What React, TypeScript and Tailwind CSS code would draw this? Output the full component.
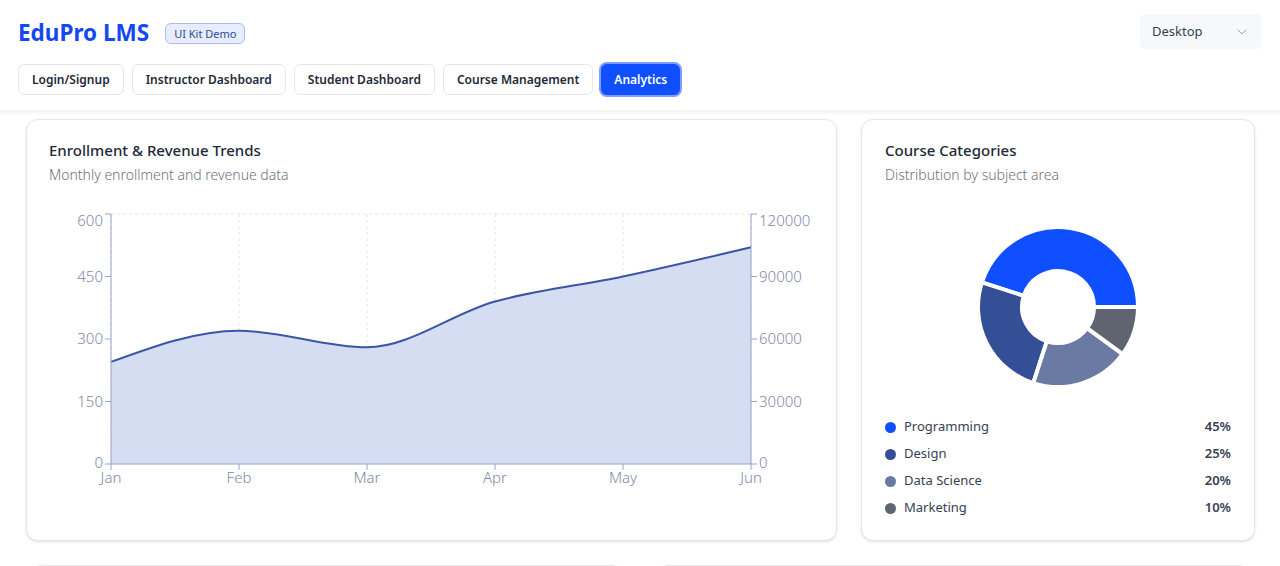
import { ChevronDown } from "lucide-react";

type Pt = { x: number; y: number };

const months = ["Jan", "Feb", "Mar", "Apr", "May", "Jun"];
const enrollments = [245, 320, 280, 390, 450, 520];

const categories = [
  { name: "Programming", value: 45, color: "#0f4fff" },
  { name: "Design", value: 25, color: "#354f96" },
  { name: "Data Science", value: 20, color: "#6b7aa3" },
  { name: "Marketing", value: 10, color: "#5f6470" },
];

// monotone-x curve, same as d3's curveMonotoneX
function monotonePath(pts: Pt[]) {
  const n = pts.length;
  const t: number[] = new Array(n).fill(0);
  const sign = (v: number) => (v < 0 ? -1 : 1);
  for (let i = 1; i < n - 1; i++) {
    const h0 = pts[i].x - pts[i - 1].x;
    const h1 = pts[i + 1].x - pts[i].x;
    const s0 = (pts[i].y - pts[i - 1].y) / h0;
    const s1 = (pts[i + 1].y - pts[i].y) / h1;
    const p = (s0 * h1 + s1 * h0) / (h0 + h1);
    t[i] = (sign(s0) + sign(s1)) * Math.min(Math.abs(s0), Math.abs(s1), 0.5 * Math.abs(p)) || 0;
  }
  const h = pts[1].x - pts[0].x;
  t[0] = (3 * (pts[1].y - pts[0].y) / h - t[1]) / 2;
  const hl = pts[n - 1].x - pts[n - 2].x;
  t[n - 1] = (3 * (pts[n - 1].y - pts[n - 2].y) / hl - t[n - 2]) / 2;
  let d = `M${pts[0].x},${pts[0].y}`;
  for (let i = 0; i < n - 1; i++) {
    const dx = (pts[i + 1].x - pts[i].x) / 3;
    d += ` C${pts[i].x + dx},${pts[i].y + dx * t[i]} ${pts[i + 1].x - dx},${pts[i + 1].y - dx * t[i + 1]} ${pts[i + 1].x},${pts[i + 1].y}`;
  }
  return d;
}

function TrendChart() {
  const left = 62;
  const right = 702;
  const top = 14;
  const bottom = 264;
  const step = (right - left) / 5;
  const pts = enrollments.map((v, i) => ({ x: left + i * step, y: bottom - (v / 600) * (bottom - top) }));
  const line = monotonePath(pts);
  const area = `${line} L${right},${bottom} L${left},${bottom} Z`;
  const leftTicks = [0, 150, 300, 450, 600];
  const rightTicks = [0, 30000, 60000, 90000, 120000];
  const axis = "#9aa3c6";
  const label = "#7f88a8";

  return (
    <svg width={765} height={290} className="block">
      <line x1={left} y1={top} x2={right} y2={top} stroke="#e3e5ea" strokeDasharray="3 3" />
      {months.map((_, i) => (
        <line key={i} x1={left + i * step} y1={top} x2={left + i * step} y2={bottom} stroke="#e3e5ea" strokeDasharray="3 3" />
      ))}
      <path d={area} fill="#d5ddf3" />
      <path d={line} fill="none" stroke="#3a55a5" strokeWidth={2} />
      <line x1={left} y1={top} x2={left} y2={bottom} stroke={axis} />
      <line x1={right} y1={top} x2={right} y2={bottom} stroke={axis} />
      <line x1={left} y1={bottom} x2={right} y2={bottom} stroke={axis} />
      {leftTicks.map((v, i) => {
        const y = bottom - (i / 4) * (bottom - top);
        const ty = i === 4 ? y + 12 : i === 0 ? y + 4 : y + 5;
        return (
          <g key={v}>
            <line x1={left - 6} y1={y} x2={left} y2={y} stroke={axis} />
            <text x={left - 8} y={ty} textAnchor="end" fontSize={15} fill={label} fontWeight={300}>
              {v}
            </text>
          </g>
        );
      })}
      {rightTicks.map((v, i) => {
        const y = bottom - (i / 4) * (bottom - top);
        const ty = i === 4 ? y + 12 : i === 0 ? y + 4 : y + 5;
        return (
          <g key={v}>
            <line x1={right} y1={y} x2={right + 6} y2={y} stroke={axis} />
            <text x={right + 8} y={ty} fontSize={15} fill={label} fontWeight={300}>
              {v}
            </text>
          </g>
        );
      })}
      {months.map((m, i) => (
        <g key={m}>
          <line x1={left + i * step} y1={bottom} x2={left + i * step} y2={bottom + 6} stroke={axis} />
          <text x={left + i * step} y={bottom + 19} textAnchor="middle" fontSize={15} fill={label} fontWeight={300}>
            {m}
          </text>
        </g>
      ))}
    </svg>
  );
}

function Donut() {
  const cx = 100;
  const cy = 90;
  const ro = 80;
  const ri = 36;
  let start = 0;
  const rad = (a: number) => (a * Math.PI) / 180;
  const pt = (r: number, a: number) => `${cx + r * Math.cos(rad(a))},${cy - r * Math.sin(rad(a))}`;
  return (
    <svg width={200} height={180} className="block">
      {categories.map((c) => {
        const end = start + (c.value / 100) * 360;
        const large = end - start > 180 ? 1 : 0;
        const d = `M${pt(ro, start)} A${ro},${ro} 0 ${large} 0 ${pt(ro, end)} L${pt(ri, end)} A${ri},${ri} 0 ${large} 1 ${pt(ri, start)} Z`;
        start = end;
        return <path key={c.name} d={d} fill={c.color} stroke="#fff" strokeWidth={4} strokeLinejoin="round" />;
      })}
    </svg>
  );
}

const tabs = ["Login/Signup", "Instructor Dashboard", "Student Dashboard", "Course Management", "Analytics"];

export default function App() {
  return (
    <div className="min-h-[566px] bg-white text-gray-800" style={{ fontFamily: '"Noto Sans", "Open Sans", sans-serif' }}>
      <header className="bg-white px-[18px] pt-[14px] pb-[15px] shadow-[0_2px_4px_rgba(0,0,0,0.06)] border-b border-gray-100">
        <div className="flex items-center justify-between h-[35px]">
          <div className="flex items-center gap-4 pt-1">
            <h1 className="text-[22.5px] font-bold text-[#1448f0] leading-none">EduPro LMS</h1>
            <span className="text-[11px] leading-none px-2 py-[4px] rounded-md bg-[#e7edfc] border border-[#a9bdf5] text-[#2c4a9c]">
              UI Kit Demo
            </span>
          </div>
          <div className="w-[122px] h-[35px] rounded-md bg-[#f7f8fa] flex items-center justify-between px-3">
            <span className="text-[13px] text-gray-700">Desktop</span>
            <ChevronDown className="w-4 h-4 text-gray-400" strokeWidth={1.5} />
          </div>
        </div>
        <nav className="flex gap-2 mt-[15px]">
          {tabs.map((t) =>
            t === "Analytics" ? (
              <button key={t} className="h-[31px] px-[13px] rounded-md text-[12px] font-semibold bg-[#0f4fff] text-white ring-2 ring-[#7f9cff]">
                {t}
              </button>
            ) : (
              <button key={t} className="h-[31px] px-[13px] rounded-md text-[12px] font-semibold text-gray-800 border border-gray-200 bg-white">
                {t}
              </button>
            )
          )}
        </nav>
      </header>

      <main className="pt-[8px]">
        <div className="grid grid-cols-[1fr_394px] gap-6 px-[26px]">
          <section className="h-[422px] rounded-xl border border-gray-200 bg-white shadow-sm px-[22px] pt-[20px]">
            <h2 className="text-[15px] font-medium text-gray-800 leading-5">Enrollment &amp; Revenue Trends</h2>
            <p className="text-[14px] font-light text-gray-500 mt-[5px] leading-5">Monthly enrollment and revenue data</p>
            <div className="mt-[15px]">
              <TrendChart />
            </div>
          </section>
          <section className="h-[422px] rounded-xl border border-gray-200 bg-white shadow-sm px-[23px] pt-[20px]">
            <h2 className="text-[15px] font-medium text-gray-800 leading-5">Course Categories</h2>
            <p className="text-[14px] font-light text-gray-500 mt-[5px] leading-5">Distribution by subject area</p>
            <div className="flex justify-center mt-[32px]">
              <Donut />
            </div>
            <ul className="mt-[21px] flex flex-col gap-[9px]">
              {categories.map((c) => (
                <li key={c.name} className="flex items-center justify-between h-[18px]">
                  <div className="flex items-center gap-2">
                    <span className="w-[11px] h-[11px] rounded-full" style={{ backgroundColor: c.color }} />
                    <span className="text-[13px] text-gray-700">{c.name}</span>
                  </div>
                  <span className="text-[13px] font-semibold text-gray-700">{c.value}%</span>
                </li>
              ))}
            </ul>
          </section>
        </div>
        <div className="grid grid-cols-2 gap-8 px-[30px] mt-6">
          <section className="h-40 rounded-xl border border-gray-200 bg-white shadow-sm" />
          <section className="h-40 rounded-xl border border-gray-200 bg-white shadow-sm" />
        </div>
      </main>
    </div>
  );
}
